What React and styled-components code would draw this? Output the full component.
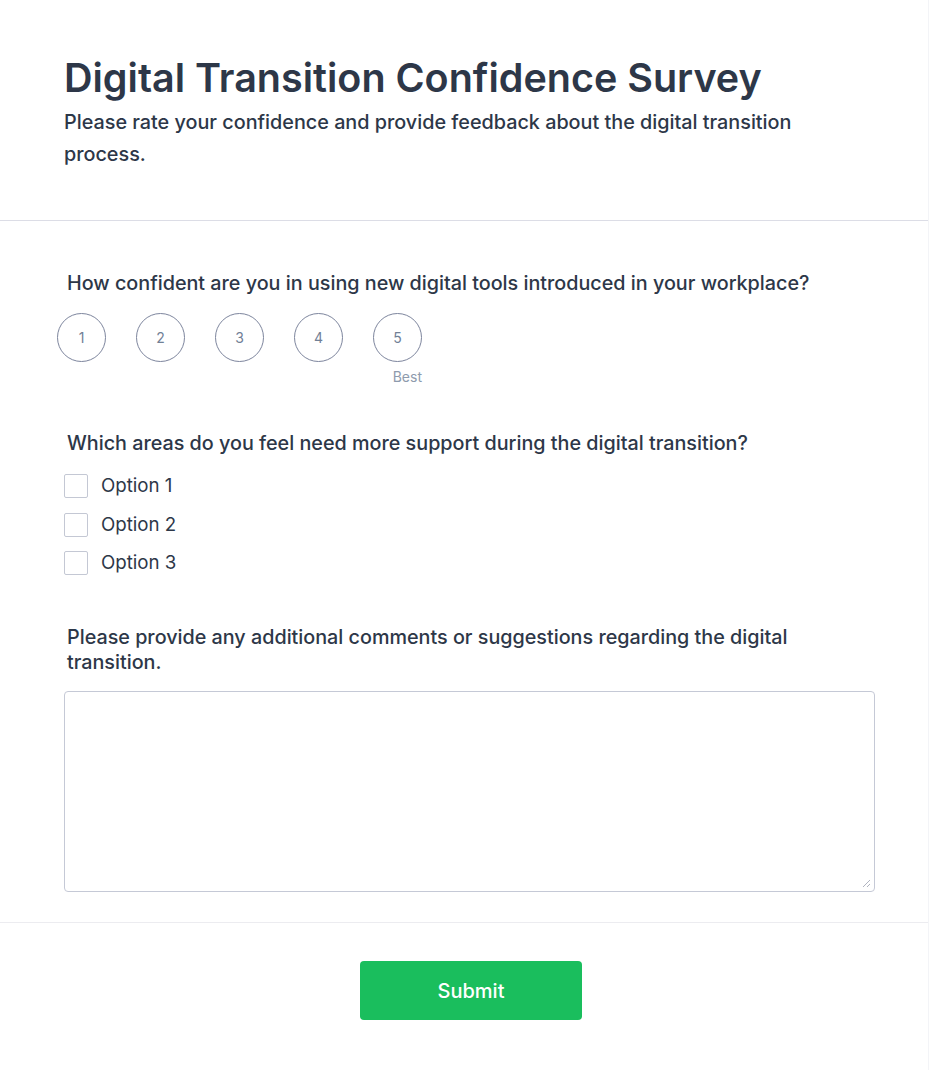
import React from 'react';
import styled, { createGlobalStyle } from 'styled-components';

const GlobalStyle = createGlobalStyle`
	body {
		margin: 0;
		background: #ffffff;
		font-family: Inter, 'Noto Sans', sans-serif;
		color: #2d3748;
	}
`;

const Page = styled.main`
	width: 929px;
	min-height: 1070px;
	border-right: 1px solid #f3f4f7;
	box-sizing: border-box;
`;

const Header = styled.header`
	padding: 53px 64px 50px;
	border-bottom: 1px solid #dcdde6;
`;

const Title = styled.h1`
	margin: 0;
	font-size: 39.5px;
	line-height: 50px;
	font-weight: 600;
	color: #2d3748;
`;

const Subtitle = styled.p`
	margin: 3px 0 0;
	font-size: 19.8px;
	line-height: 32px;
	font-weight: 500;
	color: #2d3748;
	max-width: 760px;
`;

const Body = styled.section`
	padding: 50px 53px 30px 64px;
	border-bottom: 1px solid #ececf0;
	display: flex;
	flex-direction: column;
`;

const Question = styled.div`
	margin-bottom: ${(p) => p.$space ?? 36}px;
`;

const Label = styled.div`
	padding-left: 3px;
	font-size: 19.75px;
	line-height: 25px;
	font-weight: 500;
	color: #2d3748;
	margin-bottom: ${(p) => p.$gap ?? 16}px;
`;

const Scale = styled.div`
	display: flex;
	gap: 30px;
	margin-left: -7px;
`;

const ScaleItem = styled.div`
	display: flex;
	flex-direction: column;
	align-items: flex-end;
`;

const Circle = styled.button`
	width: 49px;
	height: 49px;
	border-radius: 50%;
	border: 1px solid #7d859d;
	background: #fff;
	color: #718096;
	font-family: Inter, sans-serif;
	font-size: 14px;
	padding: 0;
	display: flex;
	align-items: center;
	justify-content: center;
`;

const Hint = styled.span`
	margin-top: 7px;
	font-size: 14px;
	line-height: 16px;
	color: #8e9bad;
	height: 16px;
`;

const Options = styled.div`
	display: flex;
	flex-direction: column;
	gap: 14.5px;
`;

const Option = styled.label`
	display: flex;
	align-items: center;
	gap: 13px;
	font-size: 18.7px;
	line-height: 24px;
	color: #2d3748;
`;

const Box = styled.span`
	width: 22px;
	height: 22px;
	border: 1px solid #c4c8d4;
	border-radius: 2px;
	background: #fff;
`;

const TextArea = styled.div`
	height: 199px;
	border: 1px solid #c5c9d6;
	border-radius: 4px;
	position: relative;
`;

const Grip = styled.svg`
	position: absolute;
	right: 3px;
	bottom: 3px;
`;

const Footer = styled.footer`
	display: flex;
	justify-content: center;
	padding: 38px 0 38px 14px;
`;

const SubmitButton = styled.button`
	width: 222px;
	height: 59px;
	border: none;
	border-radius: 4px;
	background: #1abe5d;
	color: #ffffff;
	font-family: Inter, sans-serif;
	font-size: 20px;
	font-weight: 500;
`;

export default function App() {
	return (
		<Page>
			<GlobalStyle />
			<Header>
				<Title>Digital Transition Confidence Survey</Title>
				<Subtitle>
					Please rate your confidence and provide feedback about the digital
					transition process.
				</Subtitle>
			</Header>
			<Body>
				<Question $space={46}>
					<Label $gap={17}>
						How confident are you in using new digital tools introduced in your
						workplace?
					</Label>
					<Scale>
						{[1, 2, 3, 4, 5].map((n) => (
							<ScaleItem key={n}>
								<Circle>{n}</Circle>
								<Hint>{n === 5 ? 'Best' : ''}</Hint>
							</ScaleItem>
						))}
					</Scale>
				</Question>
				<Question $space={50}>
					<Label $gap={18}>
						Which areas do you feel need more support during the digital
						transition?
					</Label>
					<Options>
						{['Option 1', 'Option 2', 'Option 3'].map((o) => (
							<Option key={o}>
								<Box />
								{o}
							</Option>
						))}
					</Options>
				</Question>
				<Question $space={0}>
					<Label $gap={16}>
						Please provide any additional comments or suggestions regarding the
						digital transition.
					</Label>
					<TextArea>
						<Grip width="10" height="10" viewBox="0 0 10 10">
							<path d="M9 2 L2 9 M9 6 L6 9" stroke="#b0b4c0" strokeWidth="1" />
						</Grip>
					</TextArea>
				</Question>
			</Body>
			<Footer>
				<SubmitButton>Submit</SubmitButton>
			</Footer>
		</Page>
	);
}
